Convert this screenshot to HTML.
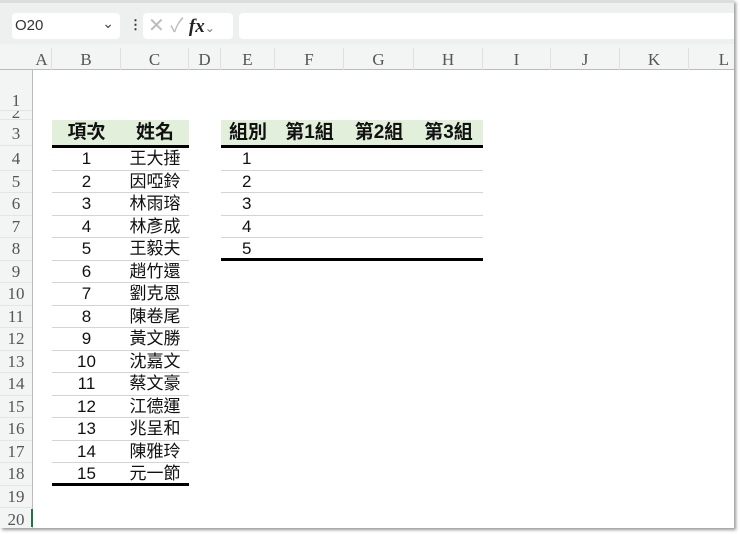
<!DOCTYPE html>
<html><head><meta charset="utf-8"><style>
*{margin:0;padding:0;box-sizing:border-box}
body{width:740px;height:534px;background:#fff;position:relative;overflow:hidden;font-family:"Liberation Sans","Noto Sans CJK TC",sans-serif}
.a{position:absolute}
.ch{position:absolute;top:48px;height:22px;font:17px "Liberation Serif",serif;color:#555;text-align:center;line-height:24px;border-right:1px solid #e0e0e0}
.rh{position:absolute;left:0;width:32px;font:17px "Liberation Serif",serif;color:#555;text-align:center;border-bottom:1px solid #e4e4e4;overflow:hidden}
.c{position:absolute;height:22.5px;line-height:22px;font-size:17px;color:#111;text-align:center;border-bottom:1px solid #d4d4d4}
.h{position:absolute;top:120px;height:26px;line-height:26px;font-size:19px;font-weight:bold;color:#111;text-align:center;background:#e2efda}
</style></head><body>
<div class="a" style="left:0;top:0;width:734px;height:528px;background:#fff;box-shadow:2px 2px 3px #999"></div>
<div class="a" style="left:0;top:0;width:734px;height:48px;background:#eef0f0;border-top:3px solid #ddd"></div>
<div class="a" style="left:12px;top:13px;width:108px;height:26px;background:#fff;border-radius:4px;font-size:15px;color:#333;line-height:26px;padding-left:3px">O20<span style="position:absolute;right:6px;top:-3px;font-size:14px;color:#444">&#8964;</span></div>
<div class="a" style="left:129px;top:17px;font-size:13px;color:#333;font-weight:bold">⋮</div>
<div class="a" style="left:143px;top:13px;width:90px;height:26px;background:#fff;border-radius:4px;color:#bbb;font-size:20px;line-height:26px;padding-left:5px">✕ <span style="font-size:19px">✓</span> <i style="font-family:'Liberation Serif',serif;color:#222;font-weight:bold;font-size:19px">fx</i><span style="font-size:12px;color:#777">&#8964;</span></div>
<div class="a" style="left:239px;top:13px;width:495px;height:26px;background:#fff;border-radius:4px 0 0 4px"></div>
<div class="a" style="left:0;top:44px;width:734px;height:26px;background:#f3f4f4;border-bottom:1px solid #bbb"></div>
<div class="a" style="left:0;top:70px;width:33px;height:458px;background:#f3f4f4;border-right:1px solid #bbb"></div>
<div class="ch" style="left:32px;width:20px">A</div>
<div class="ch" style="left:52px;width:69px">B</div>
<div class="ch" style="left:121px;width:68px">C</div>
<div class="ch" style="left:189px;width:32px">D</div>
<div class="ch" style="left:221px;width:54px">E</div>
<div class="ch" style="left:275px;width:69px">F</div>
<div class="ch" style="left:344px;width:70px">G</div>
<div class="ch" style="left:414px;width:69px">H</div>
<div class="ch" style="left:483px;width:68px">I</div>
<div class="ch" style="left:551px;width:69px">J</div>
<div class="ch" style="left:620px;width:69px">K</div>
<div class="ch" style="left:689px;width:45px;border:0;text-align:right;padding-right:5px">L</div>
<div class="rh" style="top:70px;height:41px;line-height:62px">1</div>
<div class="rh" style="top:111px;height:9px;line-height:4px">2</div>
<div class="rh" style="top:120px;height:26px;line-height:28px">3</div>
<div class="rh" style="top:148px;height:22.5px;line-height:22px">4</div>
<div class="rh" style="top:170.5px;height:22.5px;line-height:22px">5</div>
<div class="rh" style="top:193px;height:22.5px;line-height:22px">6</div>
<div class="rh" style="top:215.5px;height:22.5px;line-height:22px">7</div>
<div class="rh" style="top:238px;height:22.5px;line-height:22px">8</div>
<div class="rh" style="top:260.5px;height:22.5px;line-height:22px">9</div>
<div class="rh" style="top:283px;height:22.5px;line-height:22px">10</div>
<div class="rh" style="top:305.5px;height:22.5px;line-height:22px">11</div>
<div class="rh" style="top:328px;height:22.5px;line-height:22px">12</div>
<div class="rh" style="top:350.5px;height:22.5px;line-height:22px">13</div>
<div class="rh" style="top:373px;height:22.5px;line-height:22px">14</div>
<div class="rh" style="top:395.5px;height:22.5px;line-height:22px">15</div>
<div class="rh" style="top:418px;height:22.5px;line-height:22px">16</div>
<div class="rh" style="top:440.5px;height:22.5px;line-height:22px">17</div>
<div class="rh" style="top:463px;height:22.5px;line-height:22px">18</div>
<div class="rh" style="top:485.5px;height:22.5px;line-height:22px">19</div>
<div class="rh" style="top:508px;height:20px;line-height:24px;border:0">20</div>
<div class="a" style="left:31px;top:509px;width:2px;height:18px;background:#217346"></div>

<div class="h" style="left:52px;width:69px">項次</div>
<div class="h" style="left:121px;width:68px">姓名</div>
<div class="a" style="left:52px;top:145px;width:137px;height:3px;background:#000"></div>
<div class="h" style="left:221px;width:54px">組別</div>
<div class="h" style="left:275px;width:69px">第1組</div>
<div class="h" style="left:344px;width:70px">第2組</div>
<div class="h" style="left:414px;width:69px">第3組</div>
<div class="a" style="left:221px;top:145px;width:262px;height:3px;background:#000"></div>

<div id="L"></div>
<script>
var n=["王大捶","因啞鈴","林雨瑢","林彥成","王毅夫","趙竹還","劉克恩","陳卷尾","黃文勝","沈嘉文","蔡文豪","江德運","兆呈和","陳雅玲","元一節"];
var h="";
for(var i=0;i<15;i++){var t=148+i*22.5;
h+='<div class="c" style="left:52px;width:69px;top:'+t+'px">'+(i+1)+'</div><div class="c" style="left:121px;width:68px;top:'+t+'px">'+n[i]+'</div>';
if(i<5)h+='<div class="c" style="left:221px;width:262px;top:'+t+'px;text-align:left;padding-left:21px">'+(i+1)+'</div>';}
h+='<div class="a" style="left:52px;top:483px;width:137px;height:3px;background:#000"></div>';
h+='<div class="a" style="left:221px;top:258px;width:262px;height:3px;background:#000"></div>';
document.getElementById("L").innerHTML=h;
</script>
</body></html>
